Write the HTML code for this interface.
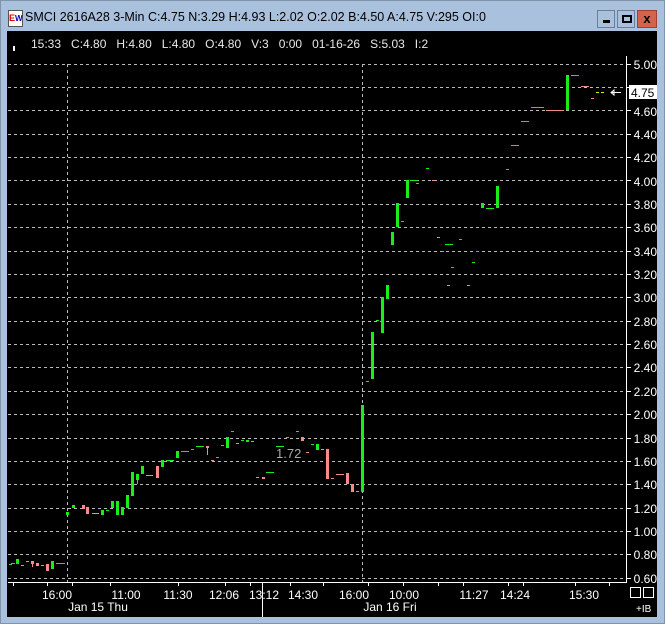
<!DOCTYPE html>
<html><head><style>
body{margin:0;width:665px;height:624px;background:#a9c1dd;position:relative;overflow:hidden;font-family:"Liberation Sans",sans-serif}
.b{position:absolute;top:10px;width:16px;height:16px;border:1px solid #6b7f96;background:#a9c1dd}
</style></head><body>
<div style="position:absolute;left:0;top:0;width:663px;height:622px;border:1px solid #7f93ab"></div>
<div style="position:absolute;left:8px;top:10px;width:13px;height:15px;background:#fff;border:1px solid #555;font-size:9px;line-height:15px;font-weight:bold"><span style="color:#d00">E</span><span style="color:#00c;font-size:8px">W</span></div>
<div style="position:absolute;left:25px;top:10px;font-size:12.5px;color:#000;white-space:nowrap">SMCI 2616A28 3-Min C:4.75 N:3.29 H:4.93 L:2.02 O:2.02 B:4.50 A:4.75 V:295 OI:0</div>
<div class="b" style="left:597px"><div style="position:absolute;left:5px;top:9px;width:7px;height:3px;background:#000"></div></div>
<div class="b" style="left:617px"><div style="position:absolute;left:4px;top:4px;width:6px;height:4px;border:2px solid #000"></div></div>
<div class="b" style="left:637px;width:18px;background:#d4634d;border-color:#a04030;font-weight:bold;font-size:13px;text-align:center;line-height:16px">x</div>
<svg style="position:absolute;left:0;top:0" width="665" height="624" font-family="Liberation Sans" font-size="12">
<rect x="7" y="31" width="650" height="586" fill="#000"/>
<rect x="13" y="46" width="2" height="5" fill="#fff"/>
<text x="31" y="48" fill="#e8e8e8" xml:space="preserve">15:33   C:4.80   H:4.80   L:4.80   O:4.80   V:3   0:00   01-16-26   S:5.03   I:2</text>
<g stroke="#bbb" stroke-dasharray="3,3" stroke-width="1">
<path d="M8 64.5H626M8 87.5H626M8 110.5H626M8 134.5H626M8 157.5H626M8 180.5H626M8 204.5H626M8 227.5H626M8 251.5H626M8 274.5H626M8 297.5H626M8 321.5H626M8 344.5H626M8 367.5H626M8 391.5H626M8 414.5H626M8 438.5H626M8 461.5H626M8 484.5H626M8 508.5H626M8 531.5H626M8 554.5H626M8 578.5H626"/>
<path d="M67.5 64V582M362.5 64V582"/>
</g>
<path d="M626.5 56V582.5H8" stroke="#fff" fill="none"/>
<path d="M262.5 582V617" stroke="#fff"/>
<g stroke="#fff">
<path d="M626 64.5h5M626 87.5h5M626 110.5h5M626 134.5h5M626 157.5h5M626 180.5h5M626 204.5h5M626 227.5h5M626 251.5h5M626 274.5h5M626 297.5h5M626 321.5h5M626 344.5h5M626 367.5h5M626 391.5h5M626 414.5h5M626 438.5h5M626 461.5h5M626 484.5h5M626 508.5h5M626 531.5h5M626 554.5h5M626 578.5h5"/>
<path d="M13.5 582v4M47.5 582v4M72.5 582v4M110.5 582v4M178.5 582v4M225.5 582v4M250.5 582v4M290.5 582v4M323.5 582v4M368.5 582v4M403.5 582v4M438.5 582v4M463.5 582v4M508.5 582v4M523.5 582v4M575.5 582v4M609.5 582v4"/>
</g>
<g fill="#fff" text-anchor="end">
<text x="657" y="69">5.00</text><text x="657" y="116">4.60</text><text x="657" y="139">4.40</text><text x="657" y="162">4.20</text><text x="657" y="186">4.00</text><text x="657" y="209">3.80</text><text x="657" y="232">3.60</text><text x="657" y="256">3.40</text><text x="657" y="279">3.20</text><text x="657" y="302">3.00</text><text x="657" y="326">2.80</text><text x="657" y="349">2.60</text><text x="657" y="372">2.40</text><text x="657" y="396">2.20</text><text x="657" y="419">2.00</text><text x="657" y="443">1.80</text><text x="657" y="466">1.60</text><text x="657" y="489">1.40</text><text x="657" y="513">1.20</text><text x="657" y="536">1.00</text><text x="657" y="559">0.80</text><text x="657" y="583">0.60</text>
</g>
<rect x="629" y="85" width="28" height="14" fill="#fff"/>
<text x="631" y="97" fill="#000">4.75</text>
<g fill="#1aee1a">
<rect x="9" y="564" width="3" height="1"/><rect x="11" y="563" width="4" height="1"/><rect x="16" y="559" width="3" height="5"/><rect x="51" y="561" width="3" height="8"/><rect x="56" y="563" width="9" height="1"/>
<rect x="66" y="512" width="3" height="3"/><rect x="72" y="505" width="3" height="3"/><rect x="101" y="510" width="3" height="5"/><rect x="106" y="510" width="3" height="1"/><rect x="111" y="501" width="3" height="7"/><rect x="116" y="501" width="3" height="14"/><rect x="121" y="507" width="3" height="8"/><rect x="126" y="495" width="3" height="13"/><rect x="131" y="472" width="3" height="24"/><rect x="136" y="474" width="3" height="6"/><rect x="137" y="474" width="1" height="10"/><rect x="141" y="466" width="3" height="8"/><rect x="161" y="460" width="3" height="7"/><rect x="166" y="460" width="8" height="1"/><rect x="176" y="451" width="3" height="7"/><rect x="181" y="451" width="8" height="1"/><rect x="191" y="449" width="3" height="1"/><rect x="196" y="446" width="8" height="1"/><rect x="216" y="457" width="3" height="1"/><rect x="221" y="445" width="3" height="1"/><rect x="226" y="437" width="3" height="11"/><rect x="231" y="431" width="3" height="1"/><rect x="241" y="440" width="3" height="1"/><rect x="246" y="440" width="3" height="2"/><rect x="266" y="472" width="8" height="1"/><rect x="276" y="446" width="8" height="1"/><rect x="286" y="437" width="3" height="1"/><rect x="296" y="431" width="3" height="1"/><rect x="311" y="444" width="3" height="1"/><rect x="316" y="444" width="3" height="6"/>
<rect x="361" y="405" width="3" height="87"/><rect x="366" y="381" width="3" height="1"/><rect x="371" y="332" width="3" height="47"/><rect x="376" y="320" width="3" height="1"/><rect x="381" y="297" width="3" height="36"/><rect x="386" y="285" width="3" height="14"/><rect x="391" y="232" width="3" height="13"/><rect x="396" y="203" width="3" height="24"/><rect x="401" y="221" width="3" height="1"/><rect x="406" y="180" width="3" height="18"/><rect x="410" y="180" width="8" height="1"/><rect x="416" y="183" width="3" height="1"/><rect x="426" y="168" width="3" height="1"/><rect x="445" y="244" width="8" height="1"/><rect x="451" y="267" width="3" height="1"/><rect x="459" y="239" width="3" height="1"/><rect x="472" y="262" width="3" height="1"/><rect x="476" y="251" width="3" height="1"/><rect x="481" y="203" width="3" height="5"/><rect x="486" y="208" width="8" height="1"/><rect x="496" y="186" width="3" height="22"/><rect x="506" y="169" width="3" height="1"/><rect x="511" y="145" width="8" height="1"/><rect x="521" y="121" width="8" height="1"/><rect x="531" y="107" width="13" height="1"/><rect x="566" y="75" width="3" height="35"/><rect x="571" y="75" width="8" height="1"/>
</g>
<g fill="#f88a8a">
<rect x="21" y="565" width="3" height="1"/><rect x="26" y="561" width="3" height="1"/><rect x="31" y="561" width="3" height="3"/><rect x="32" y="561" width="1" height="6"/><rect x="36" y="563" width="3" height="3"/><rect x="41" y="565" width="3" height="1"/><rect x="46" y="564" width="3" height="7"/>
<rect x="82" y="505" width="3" height="4"/><rect x="86" y="507" width="3" height="7"/><rect x="92" y="513" width="7" height="1"/><rect x="146" y="475" width="7" height="1"/><rect x="156" y="466" width="3" height="12"/><rect x="206" y="446" width="3" height="2"/><rect x="207" y="446" width="1" height="9"/><rect x="211" y="460" width="3" height="1"/><rect x="236" y="443" width="3" height="1"/><rect x="251" y="441" width="3" height="1"/><rect x="256" y="477" width="3" height="1"/><rect x="262" y="477" width="3" height="2"/><rect x="301" y="437" width="3" height="4"/><rect x="306" y="452" width="3" height="1"/><rect x="321" y="449" width="3" height="1"/><rect x="326" y="449" width="3" height="30"/><rect x="331" y="478" width="3" height="1"/><rect x="336" y="474" width="8" height="1"/><rect x="346" y="473" width="3" height="11"/><rect x="351" y="484" width="3" height="8"/><rect x="356" y="491" width="3" height="1"/>
<rect x="432" y="180" width="3" height="1"/><rect x="437" y="237" width="3" height="1"/><rect x="441" y="251" width="3" height="1"/><rect x="447" y="285" width="3" height="1"/><rect x="467" y="285" width="3" height="1"/><rect x="546" y="110" width="18" height="1"/><rect x="581" y="86" width="8" height="1"/><rect x="591" y="98" width="3" height="1"/>
</g>
<rect x="596" y="92" width="3" height="1" fill="#ee0"/><rect x="601" y="92" width="3" height="1" fill="#ee0"/>
<path d="M611 92.5h10M614 90l-3 2.5 3 2.5z" stroke="#fff" fill="none"/>
<text x="276" y="458" fill="#aaa" font-size="13">1.72</text>
<g fill="#fff" text-anchor="middle">
<text x="57" y="599">16:00</text><text x="126" y="599">11:00</text><text x="178" y="599">11:30</text><text x="224" y="599">12:06</text><text x="264" y="599">13:12</text><text x="303" y="599">14:30</text><text x="354" y="599">16:00</text><text x="404" y="599">10:00</text><text x="474" y="599">11:27</text><text x="515" y="599">14:24</text><text x="584" y="599">15:30</text>
<text x="98" y="611">Jan 15 Thu</text><text x="390" y="611">Jan 16 Fri</text>
</g>
<rect x="630.5" y="587.5" width="10" height="10" stroke="#fff" fill="none"/><rect x="643.5" y="587.5" width="10" height="10" stroke="#fff" fill="none"/>
<text x="636" y="612" fill="#fff" font-size="10">+IB</text>
</svg>
</body></html>
